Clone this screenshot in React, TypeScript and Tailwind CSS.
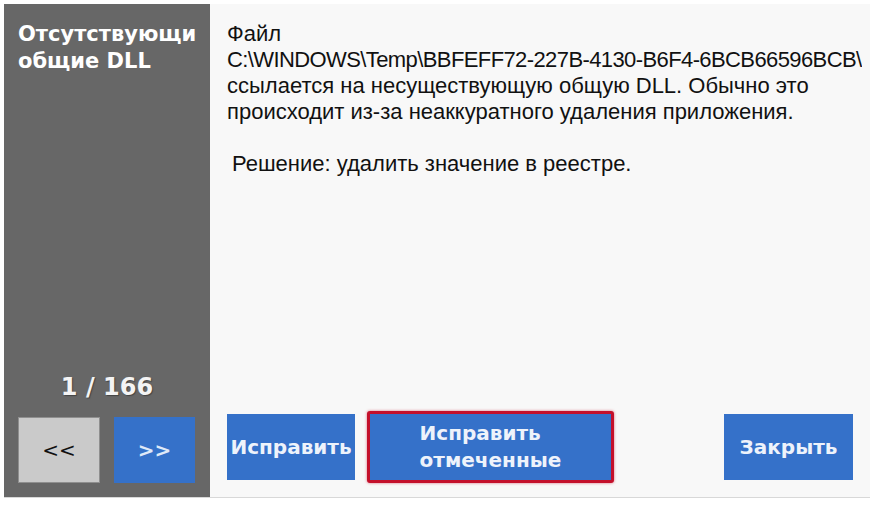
import React from "react";

const bodyFont = { fontFamily: '"Liberation Sans", Arial, sans-serif' };
const boldFont = { fontFamily: '"DejaVu Sans", Verdana, sans-serif' };

function BlueButton({
  children,
  className = "",
}: {
  children: React.ReactNode;
  className?: string;
}) {
  return (
    <button
      className={`flex shrink-0 items-center justify-center bg-[#3571c9] text-[20px] font-bold text-[#eef3fb] ${className}`}
      style={boldFont}
    >
      {children}
    </button>
  );
}

export default function App() {
  return (
    <div className="h-[506px] w-[876px] overflow-hidden bg-white pl-[4px] pt-[4px]">
      <div className="flex h-[494px] w-[866px] border-b border-[#d8d8d8]">
        {/* left side panel */}
        <div className="flex w-[206px] shrink-0 flex-col bg-[#676767] pb-[14px]">
          <h1
            className="pl-[14px] pt-[17px] text-[21px] font-bold leading-[27px] text-white"
            style={boldFont}
          >
            Отсутствующи
            <br />
            общие DLL
          </h1>
          <div className="flex-1" />
          <div
            className="mb-[12px] text-center text-[24px] font-bold text-[#f4f4f4] [text-shadow:1px_1px_1px_#444]"
            style={boldFont}
          >
            1 / 166
          </div>
          <div className="flex gap-[14px] pl-[14px]">
            <button
              className="h-[66px] w-[82px] border border-[#8f8f8f] bg-[#cacaca] text-[20px] text-[#111]"
              style={boldFont}
            >
              &lt;&lt;
            </button>
            <button
              className="h-[66px] w-[81px] bg-[#3571c9] text-[20px] font-bold text-[#dfe9f8]"
              style={boldFont}
            >
              &gt;&gt;
            </button>
          </div>
        </div>

        {/* message panel */}
        <div className="flex min-w-0 flex-1 flex-col bg-[#f8f8f8] pb-[14px] pl-[17px] pr-[17px]">
          <div
            className="pt-[17px] text-[22px] leading-[26px] text-[#111]"
            style={bodyFont}
          >
            <p>Файл</p>
            <p className="mr-[-9px] overflow-hidden whitespace-nowrap tracking-[-0.6px]">
              C:\WINDOWS\Temp\BBFEFF72-227B-4130-B6F4-6BCB66596BCB\
            </p>
            <p>ссылается на несуществующую общую DLL. Обычно это</p>
            <p>происходит из-за неаккуратного удаления приложения.</p>
            <p className="mt-[26px] pl-[5px]">
              Решение: удалить значение в реестре.
            </p>
          </div>
          <div className="flex-1" />
          <div className="flex items-center">
            <BlueButton className="h-[66px] w-[128px]">Исправить</BlueButton>
            <div className="ml-[12px] h-[72px] w-[247px] shrink-0 rounded-[3px] border-[3px] border-[#c4102b] bg-[#3571c9] shadow-[0_0_3px_rgba(196,16,43,0.6)]">
              <div
                className="flex h-full items-center justify-center text-[20px] font-bold leading-[27px] text-[#eef3fb]"
                style={boldFont}
              >
                <div className="text-left">
                  Исправить
                  <br />
                  отмеченные
                </div>
              </div>
            </div>
            <div className="flex-1" />
            <BlueButton className="h-[66px] w-[129px]">Закрыть</BlueButton>
          </div>
        </div>
      </div>
    </div>
  );
}
